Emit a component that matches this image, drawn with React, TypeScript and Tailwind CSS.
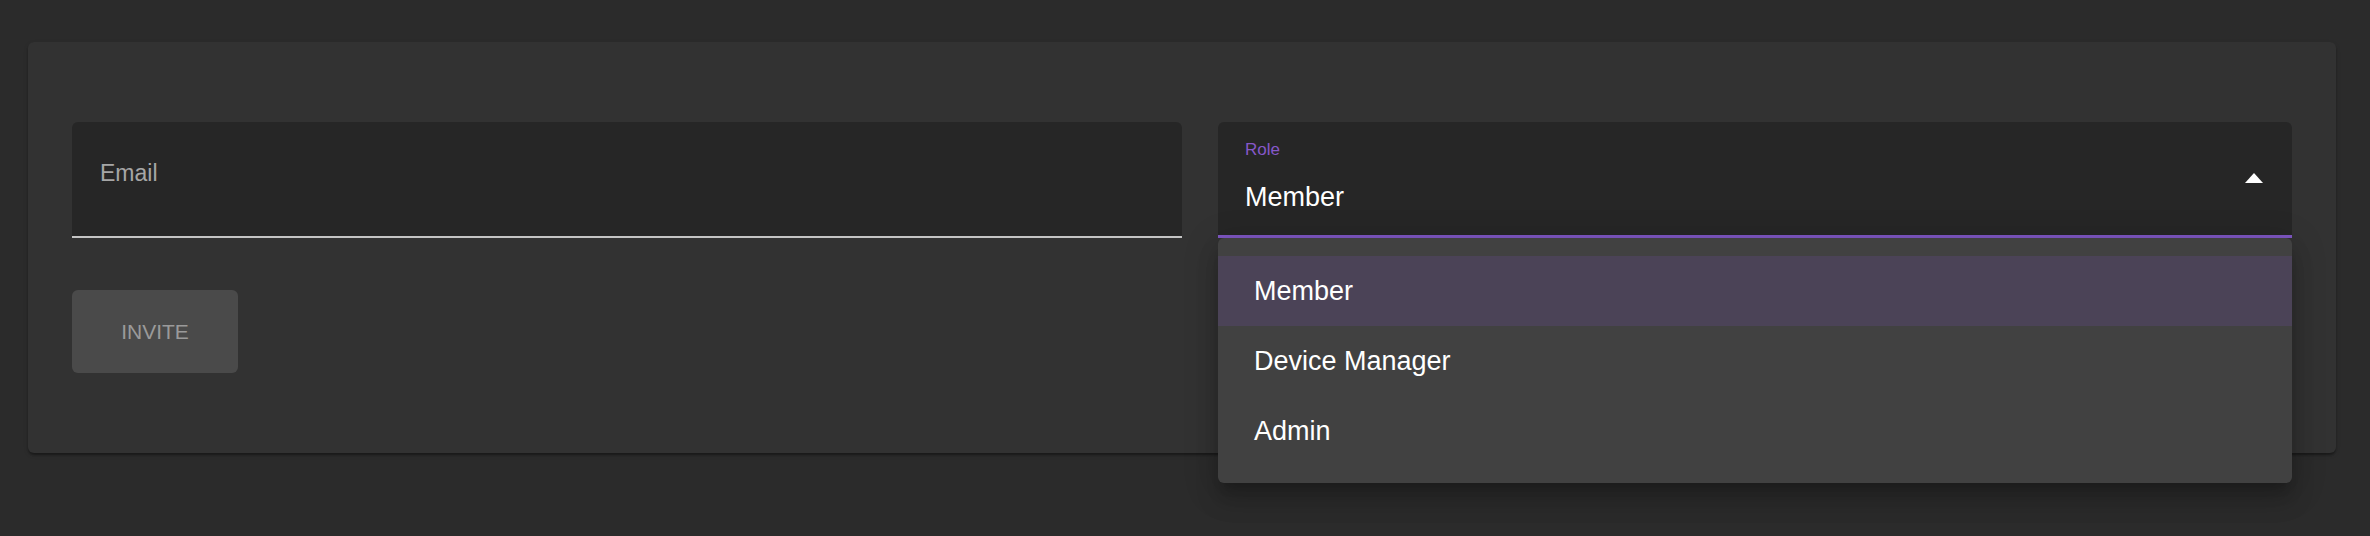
import { useState } from 'react';

const ROLES = ['Member', 'Device Manager', 'Admin'];

function App() {
  const [role, setRole] = useState('Member');
  const [open, setOpen] = useState(true);

  return (
    <div
      className="min-h-screen w-full bg-[#2b2b2b] pt-[42px] pl-[28px] pr-[34px]"
      style={{ fontFamily: '"Liberation Sans", Arial, sans-serif' }}
    >
      <div className="rounded-[6px] bg-[#323232] px-[44px] py-[80px] shadow-[0_3px_2px_-1px_rgba(0,0,0,0.2),0_2px_2px_0_rgba(0,0,0,0.14),0_2px_5px_0_rgba(0,0,0,0.12)]">
        <div className="grid grid-cols-[1110px_1fr] gap-[36px]">
          {/* email field */}
          <div className="h-[116px] rounded-t-[6px] bg-[#262626] border-b-2 border-[#c4c4c4] pl-[28px] pt-[40px]">
            <div className="text-[23px] leading-none text-[#a6a6a6]">Email</div>
          </div>

          {/* role select */}
          <div className="relative">
            <button
              type="button"
              onClick={() => setOpen(!open)}
              className="flex h-[116px] w-full items-center rounded-t-[6px] bg-[#262626] border-b-[3px] border-[#7e57c2] pl-[27px] pr-[29px] text-left"
            >
              <div className="flex flex-1 flex-col self-start pt-[19px]">
                <span className="text-[17px] leading-none text-[#8658c9]">Role</span>
                <span className="mt-[26px] text-[27px] leading-none text-white">{role}</span>
              </div>
              <svg width="18" height="10" viewBox="0 0 18 10" className="mb-[2px]">
                <path d="M0 10 L9 0 L18 10 Z" fill="#ffffff" />
              </svg>
            </button>

            {open && (
              <div className="absolute left-0 right-0 top-full z-10 rounded-[6px] bg-[#414141] pt-[18px] pb-[17px] shadow-[0_10px_10px_-6px_rgba(0,0,0,0.2),0_18px_22px_2px_rgba(0,0,0,0.14),0_6px_32px_6px_rgba(0,0,0,0.12)]">
                {ROLES.map((r) => (
                  <div
                    key={r}
                    onClick={() => {
                      setRole(r);
                      setOpen(false);
                    }}
                    className={
                      'flex h-[70px] cursor-pointer items-center pl-[36px] text-[27px] leading-none text-white ' +
                      (r === role ? 'bg-[#4b4357]' : '')
                    }
                  >
                    {r}
                  </div>
                ))}
              </div>
            )}
          </div>
        </div>

        <button
          type="button"
          className="mt-[52px] flex h-[83px] w-[166px] items-center justify-center rounded-[6px] bg-[#4a4a4a] text-[21px] leading-none text-[#9a9a9a]"
        >
          INVITE
        </button>
      </div>
    </div>
  );
}

export default App;
